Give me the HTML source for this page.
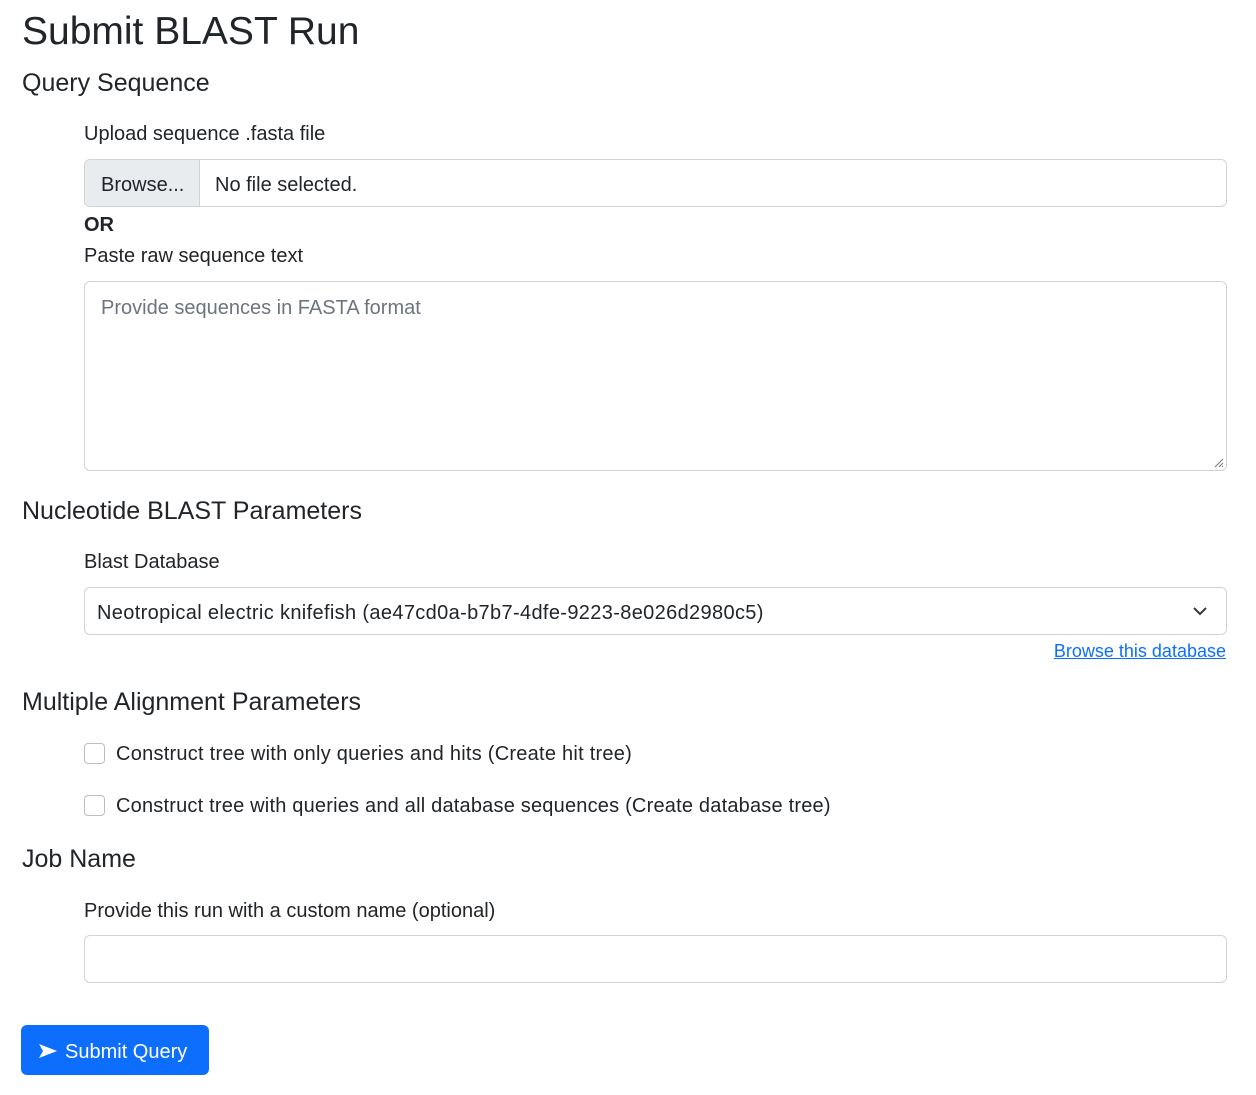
<!DOCTYPE html>
<html><head><style>
body{margin:0;width:1256px;height:1095px;background:#fff;font-family:"Liberation Sans",sans-serif;color:#212529;position:relative;overflow:hidden}
.a{position:absolute;white-space:nowrap;line-height:1}
.box{position:absolute;left:84px;width:1141px;border:1px solid #ced4da;border-radius:6px;background:#fff}
.cb{position:absolute;left:84px;width:19px;height:19px;border:1px solid #b9bec4;border-radius:4px}
</style></head><body>
<div class="a" style="left:22px;top:12px;font-size:39px">Submit BLAST Run</div>
<div class="a" style="left:22px;top:71px;font-size:25px">Query Sequence</div>
<div class="a" style="left:84px;top:124px;font-size:20px">Upload sequence .fasta file</div>
<div class="box" style="top:159px;height:46px;overflow:hidden">
 <div style="position:absolute;left:0;top:0;width:114px;height:46px;background:#e9ecef;border-right:1px solid #ced4da"></div>
 <div class="a" style="left:16px;top:15px;font-size:20px">Browse...</div>
 <div class="a" style="left:130px;top:15px;font-size:20px">No file selected.</div>
</div>
<div class="a" style="left:84px;top:215px;font-size:20px;font-weight:bold">OR</div>
<div class="a" style="left:84px;top:246px;font-size:20px">Paste raw sequence text</div>
<div class="box" style="top:281px;height:188px"><div class="a" style="left:16px;top:16px;font-size:20px;color:#6c757d">Provide sequences in FASTA format</div>
<svg style="position:absolute;right:2px;bottom:2px" width="12" height="12"><path d="M11 3L3 11M11 7L7 11M11 10L10 11" stroke="#777" stroke-width="1"/></svg></div>
<div class="a" style="left:22px;top:499px;font-size:25px">Nucleotide BLAST Parameters</div>
<div class="a" style="left:84px;top:552px;font-size:20px">Blast Database</div>
<div class="box" style="top:587px;height:46px"><div class="a" style="left:12px;top:15px;font-size:20px;letter-spacing:0.35px">Neotropical electric knifefish (ae47cd0a-b7b7-4dfe-9223-8e026d2980c5)</div>
<svg style="position:absolute;right:19px;top:18px" width="14" height="10"><path d="M1 2l6 6 6-6" fill="none" stroke="#343a40" stroke-width="2"/></svg></div>
<div class="a" style="right:30px;top:642px;font-size:18px;color:#0d6efd;text-decoration:underline">Browse this database</div>
<div class="a" style="left:22px;top:690px;font-size:25px">Multiple Alignment Parameters</div>
<div class="cb" style="top:743px"></div>
<div class="a" style="left:116px;top:744px;font-size:20px;letter-spacing:0.25px">Construct tree with only queries and hits (Create hit tree)</div>
<div class="cb" style="top:795px"></div>
<div class="a" style="left:116px;top:796px;font-size:20px;letter-spacing:0.2px">Construct tree with queries and all database sequences (Create database tree)</div>
<div class="a" style="left:22px;top:847px;font-size:25px">Job Name</div>
<div class="a" style="left:84px;top:901px;font-size:20px">Provide this run with a custom name (optional)</div>
<div class="box" style="top:935px;height:46px"></div>
<div style="position:absolute;left:21px;top:1025px;width:188px;height:50px;background:#0d6efd;border-radius:6px"></div>
<svg style="position:absolute;left:39px;top:1044px" width="18" height="14"><path d="M0 0L18 7L0 14L4 7Z" fill="#fff"/></svg>
<div class="a" style="left:65px;top:1042px;font-size:20px;color:#fff">Submit Query</div>
</body></html>
